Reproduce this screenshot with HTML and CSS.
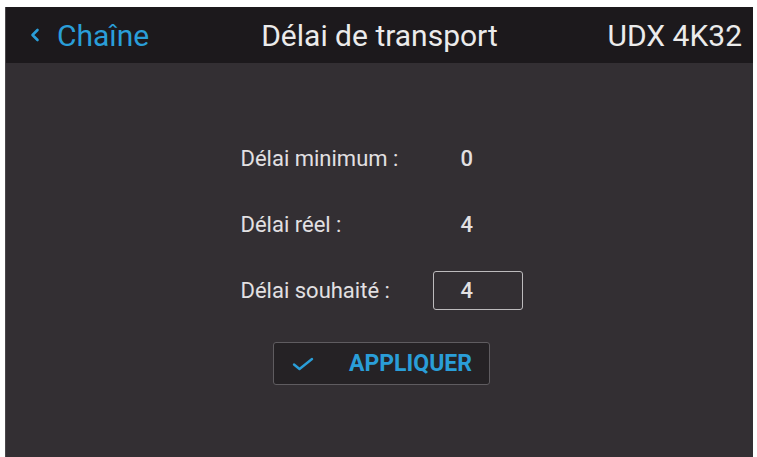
FILE: index.html
```html
<!DOCTYPE html>
<html lang="fr">
<head>
<meta charset="utf-8">
<title>Délai de transport</title>
<link rel="stylesheet" href="styles.css">
</head>
<body>
<div class="screen">
  <header class="topbar">
    <div class="back">
      <svg class="chevron" width="10" height="14" viewBox="0 0 10 14"><polyline points="7.5,2 2.5,7 7.5,12" fill="none" stroke="#2a9ed8" stroke-width="2.6" stroke-linecap="round" stroke-linejoin="round"/></svg>
      <span class="back-label">Chaîne</span>
    </div>
    <div class="title">Délai de transport</div>
    <div class="device">UDX 4K32</div>
  </header>
  <main class="content">
    <div class="form">
      <div class="grid">
        <div class="label">Délai minimum :</div>
        <div class="value">0</div>
        <div class="label">Délai réel :</div>
        <div class="value">4</div>
        <div class="label">Délai souhaité :</div>
        <div class="value"><span class="input">4</span></div>
      </div>
      <button class="apply">
        <svg class="check" width="22" height="14" viewBox="0 0 22 14"><polyline points="2,7.5 7.5,12 20,2" fill="none" stroke="#2a9ed8" stroke-width="2.4" stroke-linecap="round" stroke-linejoin="round"/></svg>
        <span class="apply-label">APPLIQUER</span>
      </button>
    </div>
  </main>
</div>
</body>
</html>
```

FILE: styles.css
```css
html, body {
  margin: 0;
  padding: 0;
  background: #ffffff;
  height: 100%;
}
body {
  padding: 7px 4px 0 5px;
  box-sizing: border-box;
  font-family: Roboto, "Liberation Sans", sans-serif;
}
.screen {
  height: 100%;
  background: #332f33;
  display: flex;
  flex-direction: column;
  border-left: 1px solid #4a474a;
}
.topbar {
  height: 56px;
  background: #1c191c;
  display: grid;
  grid-template-columns: 1fr auto 1fr;
  align-items: center;
  font-size: 30px;
  color: #ebebeb;
}
.back {
  display: flex;
  align-items: center;
  padding-left: 24px;
  color: #2a9ed8;
}
.chevron { margin-right: 17px; }
.title { text-align: center; }
.device {
  text-align: right;
  padding-right: 11px;
}
.content {
  flex: 1;
  display: flex;
  justify-content: center;
  padding-top: 62px;
  padding-left: 4px;
}
.form {
  display: flex;
  flex-direction: column;
  align-items: center;
}
.grid {
  display: grid;
  grid-template-columns: 192px 90px;
  grid-auto-rows: 66px;
  align-items: center;
  font-size: 22px;
  color: #e2e0e2;
}
.value {
  padding-left: 28px;
  font-weight: 500;
}
.input {
  display: flex;
  align-items: center;
  box-sizing: border-box;
  margin-left: -28px;
  padding-left: 27px;
  width: 90px;
  height: 39px;
  border: 1.5px solid #bdbbbd;
  border-radius: 3px;
}
.apply {
  margin-top: 19px;
  width: 217px;
  height: 43px;
  box-sizing: border-box;
  border: 1.5px solid #5f5c60;
  border-radius: 3px;
  background: #252225;
  display: flex;
  align-items: center;
  padding: 0 0 0 18px;
  font-family: Roboto, "Liberation Sans", sans-serif;
}
.check { margin-right: 35px; }
.apply-label {
  color: #2a9ed8;
  font-size: 23px;
  font-weight: 700;
}
```
